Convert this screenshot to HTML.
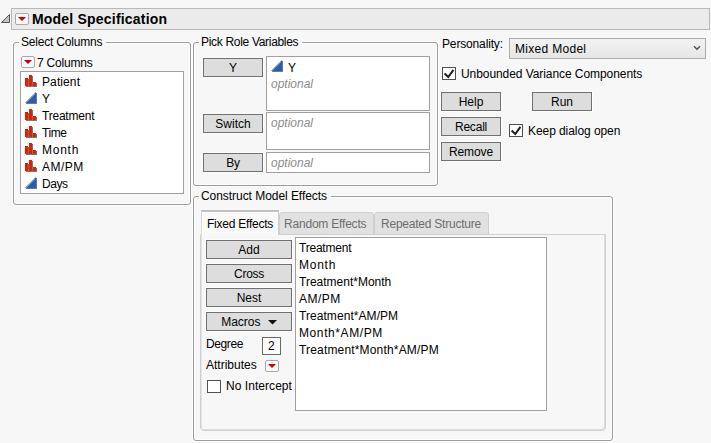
<!DOCTYPE html>
<html><head><meta charset="utf-8">
<style>
html,body{margin:0;padding:0}
body{width:711px;height:443px;background:#f7f7f7;position:relative;overflow:hidden;font-family:"Liberation Sans",sans-serif;font-size:12px;color:#000}
.a{position:absolute;box-sizing:border-box}
.t{position:absolute;white-space:nowrap;line-height:14px}
.grp{position:absolute;box-sizing:border-box;border:1px solid #9c9c9c;border-radius:3px;box-shadow:0 0 0 1px #fff, inset 0 0 0 1px #fff}
.lbl{position:absolute;white-space:nowrap;line-height:14px;background:#f7f7f7;padding:0 4px 0 2px}
.btn{position:absolute;box-sizing:border-box;background:#dddddd;border:1px solid #707070;outline:1px solid #fdfdfd;text-align:center;line-height:17px;padding-top:1px}
.box{position:absolute;box-sizing:border-box;background:#fff;border:1px solid #a0a0a0}
.rb{position:absolute;box-sizing:border-box;width:14px;height:12px;border:1px solid #a8a8a8;border-radius:2px;background:#f9f9f9}
.rb:after{content:"";position:absolute;left:1.5px;top:3px;border-left:4.5px solid transparent;border-right:4.5px solid transparent;border-top:4.5px solid #d00000}
.cb{position:absolute;box-sizing:border-box;width:14px;height:13px;border:1px solid #505050;background:#fff}
.opt{position:absolute;white-space:nowrap;line-height:14px;font-style:italic;color:#8c8c8c}
.tab{position:absolute;box-sizing:border-box;border:1px solid #d0d0d0;border-radius:3px 3px 0 0;background:#e1e1e1;color:#6d6d6d;line-height:14px}
</style></head><body>
<svg class="a" style="left:0;top:12px" width="11" height="12"><path d="M1.5 10.5 L9.5 2.5 L9.5 10.5 Z" fill="#c4c4c4" stroke="#555" stroke-width="1"/></svg>
<div class="a" style="left:11px;top:8px;width:699px;height:22px;background:#ebebeb;border:1px solid #b8b8b8"></div>
<div class="rb" style="left:15px;top:13px;height:12px"></div>
<div class="t" style="left:32px;top:11px;letter-spacing:0px;font-size:14px;font-weight:bold;line-height:16px;letter-spacing:0.2px">Model Specification</div>
<div class="grp" style="left:13px;top:42px;width:178px;height:163px"></div>
<div class="lbl" style="left:19px;top:35px;letter-spacing:-0.19px">Select Columns</div>
<div class="rb" style="left:21px;top:56px"></div>
<div class="t" style="left:37px;top:56px;letter-spacing:-0.2px;">7 Columns</div>
<div class="box" style="left:20px;top:71px;width:164px;height:123px;"></div>
<svg class="a" style="left:25px;top:75px" width="12" height="12"><rect x="0" y="3" width="3" height="8" fill="#de2100"/><rect x="4" y="0" width="3" height="11" fill="#de2100"/><rect x="8" y="7" width="3" height="4" fill="#de2100"/><rect x="3" y="4" width="1" height="8" fill="#6e7c7c"/><rect x="7" y="1" width="1" height="11" fill="#6e7c7c"/><rect x="11" y="8" width="1" height="4" fill="#6e7c7c"/><rect x="1" y="11" width="11" height="1" fill="#6e7c7c"/></svg>
<div class="t" style="left:42px;top:75px;letter-spacing:0.1px;">Patient</div>
<svg class="a" style="left:25px;top:92px" width="12" height="12" shape-rendering="crispEdges"><path d="M0 11 L11 0 L11 11 Z" fill="#2b5cb2" shape-rendering="geometricPrecision"/><rect x="9" y="2" width="1" height="1" fill="#5a96ec"/><rect x="8" y="3" width="1" height="1" fill="#5a96ec"/><rect x="7" y="4" width="1" height="1" fill="#5a96ec"/><rect x="6" y="5" width="1" height="1" fill="#5a96ec"/><rect x="5" y="6" width="1" height="1" fill="#5a96ec"/><rect x="4" y="7" width="1" height="1" fill="#5a96ec"/><rect x="3" y="8" width="1" height="1" fill="#5a96ec"/><rect x="2" y="9" width="1" height="1" fill="#5a96ec"/><rect x="1" y="10" width="1" height="1" fill="#5a96ec"/><rect x="11" y="1" width="1" height="11" fill="#6e7c7c"/><rect x="1" y="11" width="11" height="1" fill="#6e7c7c"/></svg>
<div class="t" style="left:42px;top:92px;letter-spacing:0px;">Y</div>
<svg class="a" style="left:25px;top:109px" width="12" height="12"><rect x="0" y="3" width="3" height="8" fill="#de2100"/><rect x="4" y="0" width="3" height="11" fill="#de2100"/><rect x="8" y="7" width="3" height="4" fill="#de2100"/><rect x="3" y="4" width="1" height="8" fill="#6e7c7c"/><rect x="7" y="1" width="1" height="11" fill="#6e7c7c"/><rect x="11" y="8" width="1" height="4" fill="#6e7c7c"/><rect x="1" y="11" width="11" height="1" fill="#6e7c7c"/></svg>
<div class="t" style="left:42px;top:109px;letter-spacing:-0.22px;">Treatment</div>
<svg class="a" style="left:25px;top:126px" width="12" height="12"><rect x="0" y="3" width="3" height="8" fill="#de2100"/><rect x="4" y="0" width="3" height="11" fill="#de2100"/><rect x="8" y="7" width="3" height="4" fill="#de2100"/><rect x="3" y="4" width="1" height="8" fill="#6e7c7c"/><rect x="7" y="1" width="1" height="11" fill="#6e7c7c"/><rect x="11" y="8" width="1" height="4" fill="#6e7c7c"/><rect x="1" y="11" width="11" height="1" fill="#6e7c7c"/></svg>
<div class="t" style="left:42px;top:126px;letter-spacing:-0.4px;">Time</div>
<svg class="a" style="left:25px;top:143px" width="12" height="12"><rect x="0" y="3" width="3" height="8" fill="#de2100"/><rect x="4" y="0" width="3" height="11" fill="#de2100"/><rect x="8" y="7" width="3" height="4" fill="#de2100"/><rect x="3" y="4" width="1" height="8" fill="#6e7c7c"/><rect x="7" y="1" width="1" height="11" fill="#6e7c7c"/><rect x="11" y="8" width="1" height="4" fill="#6e7c7c"/><rect x="1" y="11" width="11" height="1" fill="#6e7c7c"/></svg>
<div class="t" style="left:42px;top:143px;letter-spacing:0.75px;">Month</div>
<svg class="a" style="left:25px;top:160px" width="12" height="12"><rect x="0" y="3" width="3" height="8" fill="#de2100"/><rect x="4" y="0" width="3" height="11" fill="#de2100"/><rect x="8" y="7" width="3" height="4" fill="#de2100"/><rect x="3" y="4" width="1" height="8" fill="#6e7c7c"/><rect x="7" y="1" width="1" height="11" fill="#6e7c7c"/><rect x="11" y="8" width="1" height="4" fill="#6e7c7c"/><rect x="1" y="11" width="11" height="1" fill="#6e7c7c"/></svg>
<div class="t" style="left:42px;top:160px;letter-spacing:0.5px;">AM/PM</div>
<svg class="a" style="left:25px;top:177px" width="12" height="12" shape-rendering="crispEdges"><path d="M0 11 L11 0 L11 11 Z" fill="#2b5cb2" shape-rendering="geometricPrecision"/><rect x="9" y="2" width="1" height="1" fill="#5a96ec"/><rect x="8" y="3" width="1" height="1" fill="#5a96ec"/><rect x="7" y="4" width="1" height="1" fill="#5a96ec"/><rect x="6" y="5" width="1" height="1" fill="#5a96ec"/><rect x="5" y="6" width="1" height="1" fill="#5a96ec"/><rect x="4" y="7" width="1" height="1" fill="#5a96ec"/><rect x="3" y="8" width="1" height="1" fill="#5a96ec"/><rect x="2" y="9" width="1" height="1" fill="#5a96ec"/><rect x="1" y="10" width="1" height="1" fill="#5a96ec"/><rect x="11" y="1" width="1" height="11" fill="#6e7c7c"/><rect x="1" y="11" width="11" height="1" fill="#6e7c7c"/></svg>
<div class="t" style="left:42px;top:177px;letter-spacing:-0.45px;">Days</div>
<div class="grp" style="left:193px;top:42px;width:245px;height:144px"></div>
<div class="lbl" style="left:199px;top:35px;letter-spacing:-0.31px">Pick Role Variables</div>
<div class="btn" style="left:203px;top:58px;width:60px;height:19px;letter-spacing:0px;">Y</div>
<div class="box" style="left:266px;top:56px;width:164px;height:55px;"></div>
<svg class="a" style="left:271px;top:60px" width="12" height="12" shape-rendering="crispEdges"><path d="M0 11 L11 0 L11 11 Z" fill="#2b5cb2" shape-rendering="geometricPrecision"/><rect x="9" y="2" width="1" height="1" fill="#5a96ec"/><rect x="8" y="3" width="1" height="1" fill="#5a96ec"/><rect x="7" y="4" width="1" height="1" fill="#5a96ec"/><rect x="6" y="5" width="1" height="1" fill="#5a96ec"/><rect x="5" y="6" width="1" height="1" fill="#5a96ec"/><rect x="4" y="7" width="1" height="1" fill="#5a96ec"/><rect x="3" y="8" width="1" height="1" fill="#5a96ec"/><rect x="2" y="9" width="1" height="1" fill="#5a96ec"/><rect x="1" y="10" width="1" height="1" fill="#5a96ec"/><rect x="11" y="1" width="1" height="11" fill="#6e7c7c"/><rect x="1" y="11" width="11" height="1" fill="#6e7c7c"/></svg>
<div class="t" style="left:288px;top:61px;letter-spacing:0px;">Y</div>
<div class="opt" style="left:271px;top:77px">optional</div>
<div class="btn" style="left:203px;top:114px;width:60px;height:19px;letter-spacing:0px;">Switch</div>
<div class="box" style="left:266px;top:112px;width:164px;height:38px;"></div>
<div class="opt" style="left:271px;top:116px">optional</div>
<div class="btn" style="left:203px;top:153px;width:60px;height:19px;letter-spacing:-0.3px;">By</div>
<div class="box" style="left:266px;top:152px;width:164px;height:21px;"></div>
<div class="opt" style="left:271px;top:156px">optional</div>
<div class="t" style="left:442px;top:37px;letter-spacing:-0.15px;">Personality:</div>
<div class="a" style="left:509px;top:38px;width:197px;height:21px;border:1px solid #adadad;background:linear-gradient(#f2f2f2,#e6e6e6)"></div>
<div class="t" style="left:515px;top:42px;letter-spacing:0.3px;">Mixed Model</div>
<svg class="a" style="left:692px;top:44px" width="10" height="7"><path d="M2 2.2 L5 5.2 L8 2.2" fill="none" stroke="#505050" stroke-width="1.4"/></svg>
<div class="cb" style="left:442px;top:67px"></div><svg class="a" style="left:442px;top:67px" width="14" height="13"><path d="M2.6 6.6 L6.3 10 L11.4 2.8" fill="none" stroke="#1e1e1e" stroke-width="2"/></svg>
<div class="t" style="left:461px;top:67px;letter-spacing:-0.07px;">Unbounded Variance Components</div>
<div class="btn" style="left:441px;top:92px;width:60px;height:19px;letter-spacing:0px;">Help</div>
<div class="btn" style="left:532px;top:92px;width:60px;height:19px;letter-spacing:0px;">Run</div>
<div class="btn" style="left:441px;top:117px;width:60px;height:19px;letter-spacing:-0.2px;">Recall</div>
<div class="btn" style="left:441px;top:142px;width:60px;height:19px;letter-spacing:-0.1px;">Remove</div>
<div class="cb" style="left:509px;top:124px"></div><svg class="a" style="left:509px;top:124px" width="14" height="13"><path d="M2.6 6.6 L6.3 10 L11.4 2.8" fill="none" stroke="#1e1e1e" stroke-width="2"/></svg>
<div class="t" style="left:528px;top:124px;letter-spacing:-0.07px;">Keep dialog open</div>
<div class="grp" style="left:193px;top:196px;width:420px;height:245px"></div>
<div class="lbl" style="left:199px;top:189px;letter-spacing:-0.05px">Construct Model Effects</div>
<div class="a" style="left:200px;top:234px;width:406px;height:197px;border:1px solid #d0d0d0;border-radius:0 0 4px 4px;box-shadow:inset -1px -1px 0 #dcdcdc, inset 1px 0 0 #e4e4e4"></div>
<div class="tab" style="left:279px;top:212px;width:95px;height:23px"></div>
<div class="t" style="left:284px;top:217px;letter-spacing:-0.2px;color:#6d6d6d">Random Effects</div>
<div class="tab" style="left:374px;top:212px;width:115px;height:23px"></div>
<div class="t" style="left:381px;top:217px;letter-spacing:-0.23px;color:#6d6d6d">Repeated Structure</div>
<div class="a" style="left:201px;top:210px;width:78px;height:25px;background:#f9f9f9;border-left:1px solid #d6d6d6;border-right:1px solid #cccccc;border-top:2px solid #c2c2c2;box-shadow:inset 1px 1px 0 #fff"></div>
<div class="t" style="left:207px;top:217px;letter-spacing:-0.24px;">Fixed Effects</div>
<div class="btn" style="left:206px;top:240px;width:86px;height:19px;letter-spacing:0px;">Add</div>
<div class="btn" style="left:206px;top:264px;width:86px;height:19px;letter-spacing:-0.3px;">Cross</div>
<div class="btn" style="left:206px;top:288px;width:86px;height:19px;letter-spacing:0px;">Nest</div>
<div class="btn" style="left:206px;top:312px;width:86px;height:19px;letter-spacing:0px;">Macros <svg width="9" height="5" style="vertical-align:1px;margin-left:4px"><path d="M0 0 L9 0 L4.5 4.5 Z" fill="#111"/></svg></div>
<div class="t" style="left:206px;top:337px;letter-spacing:-0.38px;">Degree</div>
<div class="box" style="left:262px;top:337px;width:19px;height:18px;border-color:#6a6a6a"></div>
<div class="t" style="left:268px;top:339px;letter-spacing:0px;">2</div>
<div class="t" style="left:206px;top:358px;letter-spacing:0px;">Attributes</div>
<div class="rb" style="left:265px;top:360px"></div>
<div class="cb" style="left:207px;top:380px"></div>
<div class="t" style="left:226px;top:379px;letter-spacing:0.05px;">No Intercept</div>
<div class="box" style="left:295px;top:237px;width:252px;height:174px;"></div>
<div class="t" style="left:299px;top:241px;letter-spacing:-0.22px;">Treatment</div>
<div class="t" style="left:299px;top:258px;letter-spacing:0.75px;">Month</div>
<div class="t" style="left:299px;top:275px;letter-spacing:0px;">Treatment*Month</div>
<div class="t" style="left:299px;top:292px;letter-spacing:0.5px;">AM/PM</div>
<div class="t" style="left:299px;top:309px;letter-spacing:0.06px;">Treatment*AM/PM</div>
<div class="t" style="left:299px;top:326px;letter-spacing:0.6px;">Month*AM/PM</div>
<div class="t" style="left:299px;top:343px;letter-spacing:0.17px;">Treatment*Month*AM/PM</div>
</body></html>
